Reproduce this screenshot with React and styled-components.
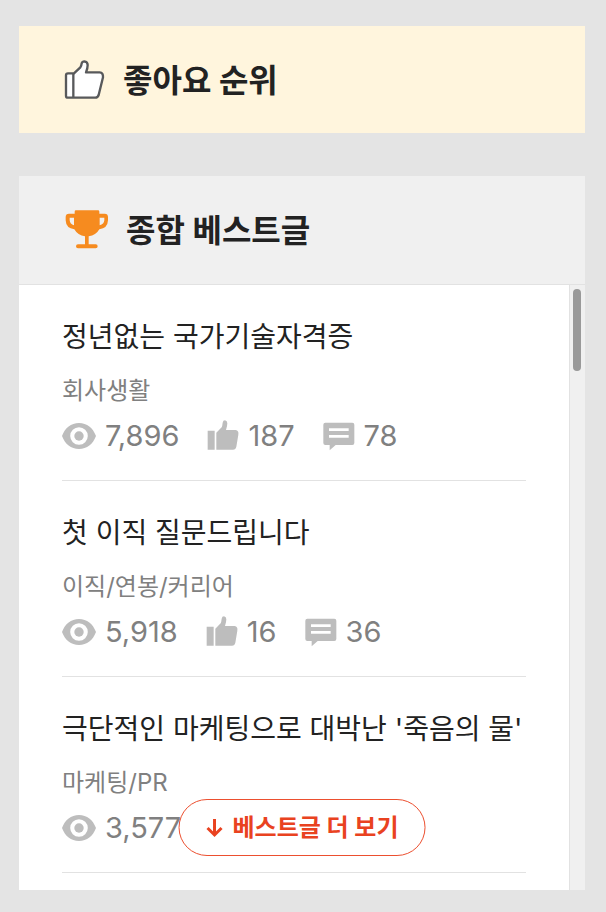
import React from 'react';
import styled, { createGlobalStyle } from 'styled-components';

const GlobalStyle = createGlobalStyle`
  * {
    box-sizing: border-box;
  }
  body {
    margin: 0;
    background: #e4e4e4;
    color: #222;
    font-family: Inter, 'Noto Sans CJK KR', sans-serif;
  }
`;

const Page = styled.main`
  display: flex;
  flex-direction: column;
  gap: 43px;
  padding: 26px 21px 22px 19px;
`;

const SectionHeader = styled.header`
  display: flex;
  align-items: center;
  gap: 18px;
  min-height: ${props => props.$height};
  padding: 0 45px;
  background: ${props => props.$background};
  > svg {
    flex: none;
  }
`;

const SectionTitle = styled.h2`
  margin: 0;
  padding-top: 2px;
  font-size: 32px;
  line-height: 48px;
  font-weight: 700;
`;

const BestPanel = styled.section`
  position: relative;
  background: #fff;
`;

const ListArea = styled.div`
  display: flex;
  border-top: 1px solid #e2e2e2;
`;

const PostList = styled.ul`
  flex: 1;
  min-width: 0;
  margin: 0;
  padding: 0 43px 17px;
  list-style: none;
`;

const PostItem = styled.li`
  padding: 32px 0 26px;
  border-bottom: 1px solid #e2e2e2;
`;

const PostTitle = styled.a`
  display: block;
  color: #222;
  font-size: 28px;
  line-height: 40px;
  text-decoration: none;
  white-space: nowrap;
`;

const PostCategory = styled.p`
  margin: 16px 0 9px;
  color: #808080;
  font-size: 24px;
  line-height: 36px;
`;

const StatRow = styled.div`
  display: flex;
  gap: 28px;
`;

const Stat = styled.span`
  display: flex;
  align-items: center;
  gap: 9px;
  color: #808080;
  font-size: 29px;
  line-height: 36px;
  > svg {
    fill: #bdbdbd;
  }
`;

const ScrollTrack = styled.div`
  width: 16px;
  padding: 4px 3px;
  border-left: 1px solid #e2e2e2;
  background: #f0f0f0;
`;

const ScrollThumb = styled.div`
  width: 8px;
  height: 82px;
  border-radius: 4px;
  background: #999;
`;

const MoreButton = styled.button`
  position: absolute;
  left: 50%;
  bottom: 34px;
  transform: translateX(-50%);
  display: flex;
  align-items: center;
  gap: 9px;
  height: 57px;
  padding: 0 26px;
  border: 1px solid #ec4f2f;
  border-radius: 29px;
  background: #fff;
  color: #e94220;
  font-family: inherit;
  font-size: 24px;
  font-weight: 700;
  line-height: 36px;
  white-space: nowrap;
  cursor: pointer;
`;

const LikeOutlineIcon = () => (
  <svg width="41" height="40" viewBox="0 0 123 120" aria-hidden="true">
    <path
      d="M6 46Q6 40 12 40H30L49 22Q52 18 53 10Q55 4 61 4Q71 5 71 15Q71 25 66 37H107Q118 38 117 52L104 105Q101 113 94 113H12Q6 113 6 107Z"
      fill="#fff"
      stroke="#58595b"
      strokeWidth="7"
      strokeLinejoin="round"
    />
    <path d="M28 40V113" stroke="#58595b" strokeWidth="7" />
  </svg>
);

const TrophyIcon = () => (
  <svg width="44" height="40" viewBox="-4 -1 132 120" aria-hidden="true">
    <path
      fill="#f68b1f"
      fillRule="evenodd"
      d="M28 4Q28 0 32 0H98Q102 0 102 4V10H118Q128 10 128 20V30Q127 54 102 57Q92 75 70 78V102H91Q97 102 97 108T91 114H38Q32 114 32 108T38 102H59V78Q37 75 27 57Q2 54 1 30V20Q1 10 11 10H28ZM13 22V30Q14 42 26 45V22ZM103 22V45Q116 42 117 30V22Z"
    />
  </svg>
);

const EyeIcon = () => (
  <svg width="34" height="28" viewBox="0 0 34 28" aria-hidden="true">
    <path
      fillRule="evenodd"
      d="M0 14C3 6 9 1 17 1S31 6 34 14C31 22 25 27 17 27S3 22 0 14ZM17 5.2A8.8 8.8 0 1 0 17 22.8A8.8 8.8 0 1 0 17 5.2Z"
    />
    <circle cx="17" cy="14" r="4.7" />
  </svg>
);

const LikeIcon = () => (
  <svg width="32" height="32" viewBox="0 0 96 96" aria-hidden="true">
    <path d="M2 32H23V89H2ZM28 38L44 22Q46 18 47 8Q48 1 54 1Q61 3 61 10Q61 18 57 30H86Q96 32 94 44L88 80Q86 89 78 89H28Z" />
  </svg>
);

const CommentIcon = () => (
  <svg width="32" height="30" viewBox="0 0 96 90" aria-hidden="true">
    <path
      fillRule="evenodd"
      d="M7 5H88Q94 5 94 11V66Q94 72 88 72H38L20 88V72H7Q1 72 1 66V11Q1 5 7 5ZM18 22V30H77V22ZM18 42V50H77V42Z"
    />
  </svg>
);

const ArrowDownIcon = () => (
  <svg width="18" height="20" viewBox="0 0 18 20" aria-hidden="true">
    <path
      d="M9 1V17M2 10L9 17L16 10"
      fill="none"
      stroke="#e94220"
      strokeWidth="3"
    />
  </svg>
);

const posts = [
  {
    id: 1,
    title: '정년없는 국가기술자격증',
    category: '회사생활',
    views: '7,896',
    likes: '187',
    comments: '78',
  },
  {
    id: 2,
    title: '첫 이직 질문드립니다',
    category: '이직/연봉/커리어',
    views: '5,918',
    likes: '16',
    comments: '36',
  },
  {
    id: 3,
    title: "극단적인 마케팅으로 대박난 '죽음의 물'",
    category: '마케팅/PR',
    views: '3,577',
  },
];

function Post({ post }) {
  return (
    <PostItem>
      <PostTitle href="#">{post.title}</PostTitle>
      <PostCategory>{post.category}</PostCategory>
      <StatRow>
        <Stat>
          <EyeIcon />
          {post.views}
        </Stat>
        {post.likes && (
          <Stat>
            <LikeIcon />
            {post.likes}
          </Stat>
        )}
        {post.comments && (
          <Stat>
            <CommentIcon />
            {post.comments}
          </Stat>
        )}
      </StatRow>
    </PostItem>
  );
}

function App() {
  return (
    <>
      <GlobalStyle />
      <Page>
        <SectionHeader $height="107px" $background="#fff5dd">
          <LikeOutlineIcon />
          <SectionTitle>좋아요 순위</SectionTitle>
        </SectionHeader>
        <BestPanel>
          <SectionHeader $height="108px" $background="#f0f0f0">
            <TrophyIcon />
            <SectionTitle>종합 베스트글</SectionTitle>
          </SectionHeader>
          <ListArea>
            <PostList>
              {posts.map(post => (
                <Post key={post.id} post={post} />
              ))}
            </PostList>
            <ScrollTrack>
              <ScrollThumb />
            </ScrollTrack>
          </ListArea>
          <MoreButton type="button">
            <ArrowDownIcon />
            베스트글 더 보기
          </MoreButton>
        </BestPanel>
      </Page>
    </>
  );
}

export default App;
